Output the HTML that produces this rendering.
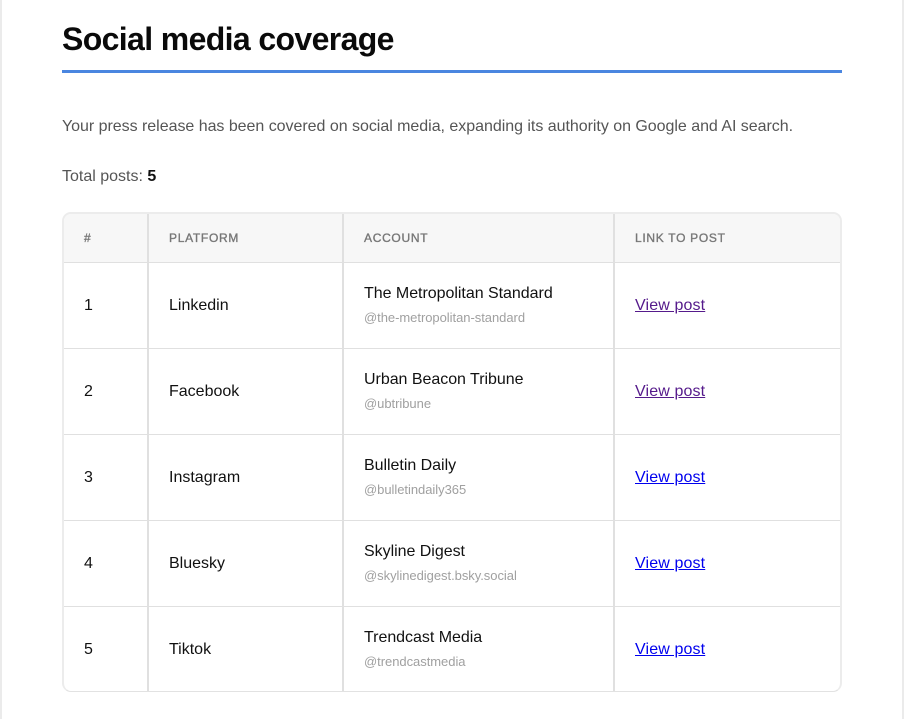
<!DOCTYPE html>
<html lang="en">
<head>
<meta charset="utf-8">
<title>Social media coverage</title>
<style>
html,body{margin:0;padding:0;background:#fff}
body{width:904px;height:719px;overflow:hidden;position:relative;font-family:"Liberation Sans",Arial,sans-serif}
.side{position:absolute;top:0;width:2px;height:719px;background:#ebebeb}
h1{position:absolute;left:62px;top:19px;margin:0;font-size:32px;line-height:40px;font-weight:700;color:#0a0a0a;letter-spacing:-.63px;white-space:nowrap}
.rule{position:absolute;left:62px;top:70px;width:780px;height:3px;background:#4a86e0}
p{position:absolute;left:62px;margin:0;font-size:16px;line-height:20px;color:#555;white-space:nowrap}
p b{color:#111}
.intro{top:117px;letter-spacing:-.03px}
.total{top:167px}
.tw{position:absolute;left:62px;top:212px;width:780px;height:480px;box-sizing:border-box;border:2px solid #ececec;border-bottom:1px solid #e2e2e2;border-radius:9px;overflow:hidden}
table{border-collapse:separate;border-spacing:0;table-layout:fixed;width:776px}
th,td{box-sizing:border-box;text-align:left;padding:0 0 0 20px;border-bottom:1px solid #e0e0e0;border-right:1px solid #e0e0e0;border-left:1px solid #e0e0e0}
th:first-child,td:first-child{border-left:0}
th:last-child,td:last-child{border-right:0}
tr:last-child td{border-bottom:0;height:85px}
th{height:49px;background:#f7f7f7;font-size:12px;font-weight:400;color:#777;letter-spacing:.7px}
th span{-webkit-text-stroke:.35px #777}
td{height:86px;font-size:16px;color:#111}
.name{display:block;line-height:20px;margin-top:-1px;letter-spacing:-.03px;white-space:nowrap}
.h{display:block;font-size:13px;line-height:16px;color:#a0a0a0;margin-top:6px;letter-spacing:-.04px;white-space:nowrap}
a{letter-spacing:.13px}
a.v{color:#551a8b}
a.n{color:#0000ee}
</style>
</head>
<body>
<div class="side" style="left:0"></div>
<div class="side" style="right:0"></div>
<h1>Social media coverage</h1>
<div class="rule"></div>
<p class="intro">Your press release has been covered on social media, expanding its authority on Google and AI search.</p>
<p class="total">Total posts: <b>5</b></p>
<div class="tw">
<table>
<colgroup><col style="width:84px"><col style="width:195px"><col style="width:271px"><col style="width:226px"></colgroup>
<tr><th><span>#</span></th><th><span>PLATFORM</span></th><th><span>ACCOUNT</span></th><th><span>LINK TO POST</span></th></tr>
<tr><td>1</td><td>Linkedin</td><td><span class="name">The Metropolitan Standard</span><span class="h">@the-metropolitan-standard</span></td><td><a class="v" href="#">View post</a></td></tr>
<tr><td>2</td><td>Facebook</td><td><span class="name">Urban Beacon Tribune</span><span class="h">@ubtribune</span></td><td><a class="v" href="#">View post</a></td></tr>
<tr><td>3</td><td>Instagram</td><td><span class="name">Bulletin Daily</span><span class="h">@bulletindaily365</span></td><td><a class="n" href="#">View post</a></td></tr>
<tr><td>4</td><td>Bluesky</td><td><span class="name">Skyline Digest</span><span class="h">@skylinedigest.bsky.social</span></td><td><a class="n" href="#">View post</a></td></tr>
<tr><td>5</td><td>Tiktok</td><td><span class="name">Trendcast Media</span><span class="h">@trendcastmedia</span></td><td><a class="n" href="#">View post</a></td></tr>
</table>
</div>
</body>
</html>
